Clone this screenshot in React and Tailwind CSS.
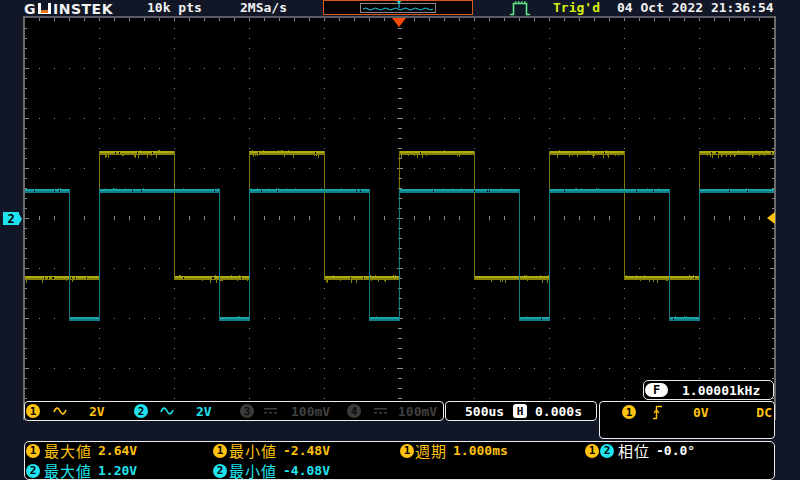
import React from 'react';

const YT = '#aea914';
const YTD = '#878300';
const CT = '#16a3aa';
const CTD = '#0f7f85';

function makeRng(seed) {
  let s = seed;
  return () => {
    s = (s * 16807) % 2147483647;
    return (s - 1) / 2147483646;
  };
}

function Graticule() {
  const els = [];
  for (let k = 1; k <= 7; k++) {
    const y = 18 + 50 * k;
    if (k === 4) continue;
    for (let j = 1; j < 50; j++) {
      const x = 24 + 15 * j;
      if (x === 399) continue;
      els.push(<rect key={`h${k}_${j}`} x={x} y={y} width="1" height="1" />);
    }
  }
  for (let i = 1; i < 10; i++) {
    if (i === 5) continue;
    const x = 24 + 75 * i;
    for (let m = 1; m < 40; m++) {
      if (m % 5 === 0) continue;
      const y = 18 + 10 * m;
      els.push(<rect key={`v${i}_${m}`} x={x} y={y} width="1" height="1" />);
    }
  }
  for (let m = 1; m < 40; m++) {
    const y = 18 + 10 * m;
    if (m % 5 === 0) els.push(<rect key={`cv${m}`} x={397} y={y} width="6" height="1" />);
    else els.push(<rect key={`cv${m}`} x={398} y={y} width="4" height="1" />);
  }
  for (let j = 1; j < 50; j++) {
    const x = 24 + 15 * j;
    if (j % 5 === 0) els.push(<rect key={`ch${j}`} x={x} y={215} width="1" height="6" />);
    else els.push(<rect key={`ch${j}`} x={x} y={216} width="1" height="4" />);
  }
  for (let m = 1; m < 40; m++) {
    const y = 18 + 10 * m;
    const major = m % 5 === 0;
    els.push(<rect key={`lt${m}`} x={25} y={y} width={major ? 4 : 2} height="1" />);
    els.push(<rect key={`rt${m}`} x={major ? 770 : 772} y={y} width={major ? 4 : 2} height="1" />);
  }
  for (let j = 1; j < 50; j++) {
    const x = 24 + 15 * j;
    els.push(<rect key={`tt${j}`} x={x} y={18} width="1" height="3" />);
  }
  return <g fill="#8a8a8a">{els}</g>;
}

function Trace({ segs, hiColor, loColor, edgeColor, seed, spikeDown }) {
  const rng = makeRng(seed);
  const els = [];
  segs.forEach(([x0, x1, y], i) => {
    els.push(<rect key={`b${i}`} x={x0} y={y} width={x1 - x0 + 1} height="2" fill={hiColor} />);
    els.push(<rect key={`d${i}`} x={x0} y={y + 2} width={x1 - x0 + 1} height="2" fill={loColor} />);
    for (let x = x0 + 1; x < x1; x++) {
      const r = rng();
      if (spikeDown && r < 0.12) {
        els.push(<rect key={`s${i}_${x}`} x={x} y={y + 4} width="1" height={1 + Math.floor(rng() * 3)} fill={loColor} />);
      } else if (r > 0.95) {
        els.push(<rect key={`s${i}_${x}`} x={x} y={y - 1} width="1" height="1" fill={loColor} />);
      } else if (r > 0.9 && r <= 0.93) {
        els.push(<rect key={`k${i}_${x}`} x={x} y={y + 1} width="1" height="2" fill="#111" />);
      }
    }
    if (i > 0) {
      const prev = segs[i - 1];
      const top = Math.min(prev[2], y);
      const bot = Math.max(prev[2], y) + 3;
      els.push(<rect key={`e${i}`} x={x0} y={top} width="1" height={bot - top} fill={edgeColor} />);
    }
  });
  return <g>{els}</g>;
}

function Scope() {
  const YH = 151;
  const YL = 276;
  const CH = 189;
  const CL = 317;
  const ySegs = [
    [25, 99, YL], [99, 174, YH], [174, 249, YL], [249, 324, YH], [324, 399, YL],
    [399, 474, YH], [474, 549, YL], [549, 624, YH], [624, 699, YL], [699, 773, YH],
  ];
  const cSegs = [
    [25, 69, CH], [69, 99, CL], [99, 219, CH], [219, 249, CL], [249, 369, CH], [369, 399, CL],
    [399, 519, CH], [519, 549, CL], [549, 669, CH], [669, 699, CL], [699, 773, CH],
  ];
  return (
    <svg width="753" height="404" viewBox="23 16 753 404" className="absolute left-0 top-0">
      <rect x="23" y="16" width="753" height="404" fill="#000" />
      <rect x="23" y="16" width="753" height="2" fill="#5a5e66" />
      <rect x="23" y="16" width="2" height="404" fill="#6a6a6a" />
      <rect x="774" y="16" width="2" height="404" fill="#6a6a6a" />
      <Graticule />
      <Trace segs={ySegs} hiColor={YT} loColor={YTD} edgeColor="#7c7806" seed={7} spikeDown />
      <Trace segs={cSegs} hiColor={CT} loColor={CTD} edgeColor="#137c82" seed={19} spikeDown={false} />
    </svg>
  );
}

const Circ = ({ n, cls }) => (
  <span className={`flex h-[14px] w-[14px] shrink-0 items-center justify-center rounded-full text-[11px] font-bold leading-none ${cls}`}>
    {n}
  </span>
);

const Tilde = ({ c }) => (
  <svg width="14" height="8" viewBox="0 0 14 8" className="shrink-0">
    <path d="M1 5 C3 0 5 0 7 4 S11 8 13 3" stroke={c} strokeWidth="1.6" fill="none" />
  </svg>
);

const DcIcon = ({ c }) => (
  <svg width="13" height="6" viewBox="0 0 13 6" className="shrink-0">
    <rect x="0" y="0" width="13" height="1.5" fill={c} />
    <rect x="0" y="4" width="3" height="1.5" fill={c} />
    <rect x="5" y="4" width="3" height="1.5" fill={c} />
    <rect x="10" y="4" width="3" height="1.5" fill={c} />
  </svg>
);

function TopBar() {
  return (
    <div className="flex h-[16px] shrink-0 items-start text-[13px] leading-[16px] text-[#f2f2f2]">
      <div className="ml-[24px] flex h-[16px] w-[89px] items-center gap-[2px] pt-[1px] font-['DejaVu_Sans',sans-serif] text-[14px] font-bold tracking-[0.5px]">
        <span>G</span>
        <span className="flex h-[11px] w-[16px] items-end border-x-[3px] border-b-[1px] border-white">
          <span className="h-[3px] w-full bg-[#e8731c]" />
        </span>
        <span>INSTEK</span>
      </div>
      <span className="ml-[34px] w-[93px]">10k pts</span>
      <span className="w-[83px]">2MSa/s</span>
      <div className="h-[15px] w-[150px] border border-[#d65a1c] bg-black">
        <svg width="148" height="13" viewBox="0 0 148 13">
          <rect x="36.5" y="2.5" width="75" height="9" fill="none" stroke="#8a8a8a" />
          <path
            d="M39 8 q2.5 -2 5 0 t5 0 t5 0 t5 0 t5 0 t5 0 t5 0 t5 0 t5 0 t5 0 t5 0 t5 0 t5 0 t5 0"
            stroke="#1fd8e6"
            strokeWidth="1"
            fill="none"
          />
          <path d="M72.5 0 h5 l-2 2 v5 h-1 v-5 z" fill="#1fe3ee" />
        </svg>
      </div>
      <svg width="20" height="16" viewBox="0 0 20 16" className="ml-[37px]">
        <path d="M0 14.5 H3.5 V3.5 H16.5 V14.5 H20" stroke="#5de88a" strokeWidth="1.6" fill="none" />
        <path d="M5 2 h1.5 M8 2 h1.5 M11 2 h1.5 M14 2 h1.5" stroke="#5de88a" strokeWidth="1.5" />
      </svg>
      <span className="ml-[23px] w-[64px] text-[#d6ee12]">Trig'd</span>
      <span>04 Oct 2022 21:36:54</span>
    </div>
  );
}

function ChannelBar() {
  return (
    <div className="absolute left-[1px] top-[385px] flex h-[20px] w-[420px] items-center rounded-[4px] border border-[#ececec] bg-black text-[13px] leading-none">
      <Circ n="1" cls="ml-[1px] bg-[#ffc20e] text-black" />
      <span className="ml-[13px]"><Tilde c="#ffc20e" /></span>
      <span className="ml-[22px] w-[16px] text-[#ffc20e]">2V</span>
      <Circ n="2" cls="ml-[29px] bg-[#1fe3ee] text-black" />
      <span className="ml-[12px]"><Tilde c="#1fe3ee" /></span>
      <span className="ml-[22px] w-[16px] text-[#1fe3ee]">2V</span>
      <Circ n="3" cls="ml-[28px] bg-[#3a3a3a] text-[#0c0c0c]" />
      <span className="ml-[10px]"><DcIcon c="#3d3d3d" /></span>
      <span className="ml-[14px] w-[40px] text-[#404040]">100mV</span>
      <Circ n="4" cls="ml-[16px] bg-[#3a3a3a] text-[#0c0c0c]" />
      <span className="ml-[13px]"><DcIcon c="#3d3d3d" /></span>
      <span className="ml-[11px] text-[#404040]">100mV</span>
    </div>
  );
}

function TimeBox() {
  return (
    <div className="absolute left-[422px] top-[385px] flex h-[20px] w-[152px] items-center rounded-[4px] border border-[#ececec] bg-black text-[13px] leading-none text-white">
      <span className="ml-[19px] w-[40px]">500us</span>
      <span className="ml-[8px] flex h-[14px] w-[14px] items-center justify-center rounded-[3px] bg-white text-[11px] text-black">H</span>
      <span className="ml-[8px]">0.000s</span>
    </div>
  );
}

function TrigBox() {
  return (
    <div className="absolute left-[576px] top-[385px] h-[38px] w-[176px] rounded-[4px] border border-[#ececec] bg-black text-[13px] leading-none text-[#ffc20e]">
      <div className="mt-[3px] flex h-[14px] items-center">
        <Circ n="1" cls="ml-[22px] bg-[#ffc20e] text-black" />
        <svg width="9" height="15" viewBox="0 0 9 15" className="ml-[17px]">
          <path d="M0 13.5 H3.5 V1.5 H9" stroke="#ffc20e" strokeWidth="1.4" fill="none" />
          <path d="M1 8 L3.5 5 L6 8" stroke="#ffc20e" strokeWidth="1.3" fill="none" />
        </svg>
        <span className="ml-[31px] w-[16px]">0V</span>
        <span className="ml-auto mr-[2px]">DC</span>
      </div>
    </div>
  );
}

function FreqBox() {
  return (
    <div className="absolute left-[620px] top-[364px] flex h-[20px] w-[131px] items-center rounded-[5px] border border-[#ececec] bg-black text-[13px] leading-none text-white">
      <span className="ml-[1px] flex h-[14px] w-[23px] items-center justify-center rounded-full bg-white text-[12px] text-black">F</span>
      <span className="ml-[14px]">1.00001kHz</span>
    </div>
  );
}

const CJK = "font-['Noto_Sans_CJK_JP',sans-serif] text-[15px] font-normal leading-[15px] tracking-[1px]";

function Meas({ circles, label, value, color, width }) {
  return (
    <div className={`flex h-[17px] items-center ${width}`}>
      {circles}
      <span className={`${CJK} ${color}`}>{label}</span>
      <span className={`ml-[6px] text-[13px] leading-none ${color}`}>{value}</span>
    </div>
  );
}

function Measurements() {
  const c1 = <Circ n="1" cls="bg-[#ffc20e] text-black" />;
  const c2 = <Circ n="2" cls="bg-[#1fe3ee] text-black" />;
  return (
    <div className="ml-[24px] mt-[21px] h-[39px] w-[751px] rounded-[5px] border border-[#ececec] bg-black">
      <div className="ml-[1px] flex">
        <Meas width="w-[187px]" circles={<span className="mr-[4px]">{c1}</span>} label="最大値" value="2.64V" color="text-[#ffc20e]" />
        <Meas width="w-[187px]" circles={<span className="mr-[2px]">{c1}</span>} label="最小値" value="-2.48V" color="text-[#ffc20e]" />
        <Meas width="w-[185px]" circles={<span className="mr-[1px]">{c1}</span>} label="週期" value="1.000ms" color="text-[#ffc20e]" />
        <Meas
          width="w-[180px]"
          circles={
            <span className="mr-[4px] flex gap-[1px]">
              {c1}
              {c2}
            </span>
          }
          label="相位"
          value="-0.0°"
          color="text-white"
        />
      </div>
      <div className="ml-[1px] mt-[3px] flex">
        <Meas width="w-[187px]" circles={<span className="mr-[4px]">{c2}</span>} label="最大値" value="1.20V" color="text-[#1fe3ee]" />
        <Meas width="w-[187px]" circles={<span className="mr-[2px]">{c2}</span>} label="最小値" value="-4.08V" color="text-[#1fe3ee]" />
      </div>
    </div>
  );
}

export default function App() {
  return (
    <div className="flex h-[480px] w-[800px] flex-col overflow-hidden bg-[#111726] font-['DejaVu_Sans_Mono',monospace] font-bold">
      <TopBar />
      <div className="flex h-[404px] shrink-0">
        <div className="w-[23px] shrink-0 pl-[3px] pt-[196px]">
          <div className="flex items-center">
            <span className="flex h-[13px] w-[16px] items-center justify-center bg-[#1fe3ee] text-[12px] leading-none text-black">2</span>
            <span className="h-0 w-0 border-y-[5px] border-l-[3px] border-y-transparent border-l-[#1fe3ee]" />
          </div>
        </div>
        <div className="relative h-[404px] w-[753px] shrink-0">
          <Scope />
          <span className="absolute left-[369px] top-[2px] h-0 w-0 border-x-[7.5px] border-t-[9px] border-x-transparent border-t-[#ff4a0a]" />
          <span className="absolute left-[744px] top-[196px] h-0 w-0 border-y-[6.5px] border-r-[8px] border-y-transparent border-r-[#ffc20e]" />
          <ChannelBar />
          <TimeBox />
          <TrigBox />
          <FreqBox />
        </div>
      </div>
      <Measurements />
    </div>
  );
}
